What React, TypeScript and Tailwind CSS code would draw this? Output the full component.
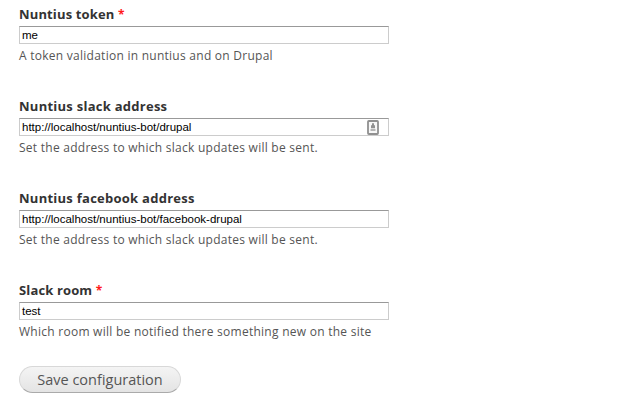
import React from "react";

type FieldProps = {
  label: string;
  value: string;
  help: string;
  required?: boolean;
  icon?: boolean;
};

function PasswordIcon() {
  return (
    <svg width="12" height="15" viewBox="0 0 12 15" className="mr-[9px] shrink-0">
      <rect x="1" y="1" width="10" height="13" rx="0.8" fill="#f7f7f7" stroke="#909090" strokeWidth="1.8" />
      <path d="M5 3.2h2v2h1v3H4v-3h1z" fill="#919191" />
      <path d="M3.5 9h5v2h-5z" fill="#b5b5b5" />
    </svg>
  );
}

function Field({ label, value, help, required, icon }: FieldProps) {
  return (
    <div className="h-[92px]">
      <label
        className={`flex h-[18px] items-center text-[13px] font-bold leading-[18px] text-[#333] ${
          required ? "tracking-[0.14px]" : "tracking-[0.26px]"
        }`}
      >
        {label}
        {required && <span className="ml-[3.5px] pt-px text-[12px] font-bold text-[#ff1a1a]">*</span>}
      </label>
      <div className="mt-[3px] flex h-[18px] w-[370px] items-center justify-between border border-[#ccc] border-t-[#999] bg-white pl-[2px] font-['Liberation_Sans',sans-serif] text-[11.5px] leading-4 text-black">
        <span>{value}</span>
        {icon && <PasswordIcon />}
      </div>
      <p className="mt-[3px] h-[18px] text-[12px] leading-[18px] tracking-[0.26px] text-[#555]">{help}</p>
    </div>
  );
}

export default function App() {
  return (
    <main className="h-[405px] w-[625px] overflow-hidden whitespace-nowrap bg-white pl-[19px] pt-[5px] font-['Open_Sans',sans-serif]">
      <Field label="Nuntius token" required value="me" help="A token validation in nuntius and on Drupal" />
      <Field
        label="Nuntius slack address"
        value="http://localhost/nuntius-bot/drupal"
        help="Set the address to which slack updates will be sent."
        icon
      />
      <Field
        label="Nuntius facebook address"
        value="http://localhost/nuntius-bot/facebook-drupal"
        help="Set the address to which slack updates will be sent."
      />
      <Field
        label="Slack room"
        required
        value="test"
        help="Which room will be notified there something new on the site"
      />
      <button className="-mt-[7px] flex h-[27px] w-[162px] items-center justify-center rounded-full border border-[#d8d8d8] border-b-[#aaa] bg-linear-to-b from-[#f4f4f4] to-[#e4e4e4] pt-px text-[14.5px] text-[#555]">
        Save configuration
      </button>
    </main>
  );
}
